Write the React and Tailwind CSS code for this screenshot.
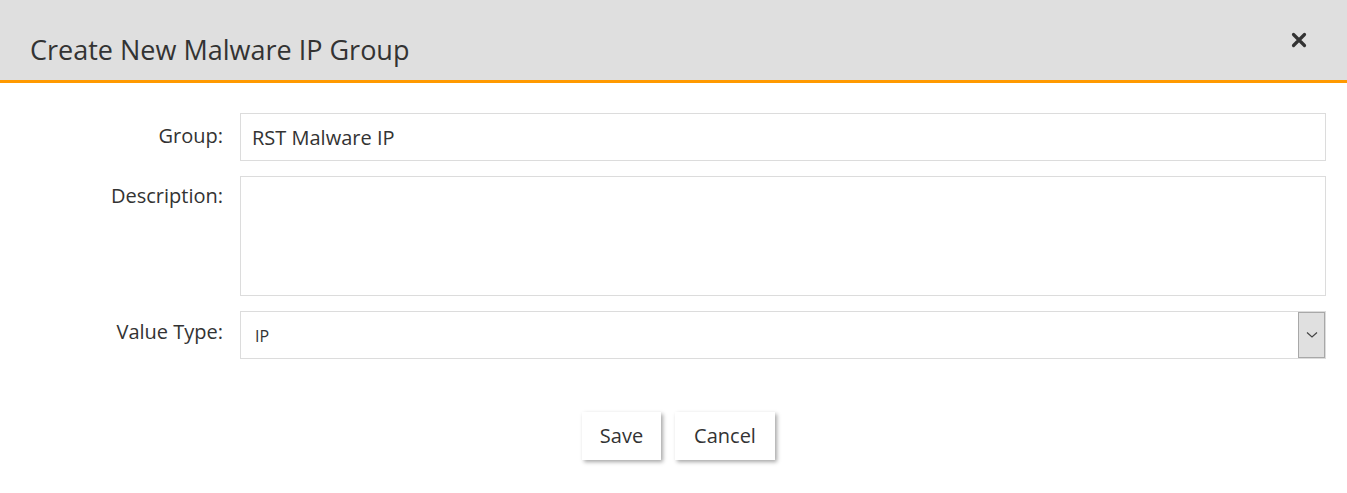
export default function App() {
  const font = { fontFamily: '"Open Sans", "Liberation Sans", sans-serif' };
  return (
    <div className="w-[1347px] h-[493px] bg-white text-[#333]" style={font}>
      <div className="h-[83px] bg-[#dfdfdf] border-b-[3px] border-[#ff9900] flex items-start justify-between pl-[30px] pr-[38px]">
        <h1 className="mt-[32px] text-[27px] leading-[36px] text-[#333]">Create New Malware IP Group</h1>
        <button className="mt-[30px] w-[20px] h-[20px] flex items-center justify-center">
          <svg width="16" height="16" viewBox="0 0 16 16">
            <path d="M2.5 2.5L13.5 13.5M13.5 2.5L2.5 13.5" stroke="#333" strokeWidth="3.2" strokeLinecap="round" />
          </svg>
        </button>
      </div>

      <div className="pt-[30px] pr-[21px] flex flex-col gap-[15px]">
        <div className="flex items-start">
          <label className="w-[224px] pr-[1px] text-right text-[20px] pt-[9px] leading-[28px]">Group:</label>
          <input
            className="ml-[16px] flex-1 h-[48px] border border-[#dcdcdc] px-[11px] text-[20px] outline-none text-[#333]"
            style={font}
            defaultValue="RST Malware IP"
          />
        </div>
        <div className="flex items-start">
          <label className="w-[224px] pr-[1px] text-right text-[20px] pt-[6px] leading-[28px]">Description:</label>
          <textarea className="ml-[16px] flex-1 h-[120px] border border-[#dcdcdc] px-[11px] py-[8px] text-[19px] outline-none resize-none" style={font} />
        </div>
        <div className="flex items-start">
          <label className="w-[224px] pr-[1px] text-right text-[20px] pt-[7px] leading-[28px]">Value Type:</label>
          <div className="ml-[16px] flex-1 h-[48px] border border-[#dcdcdc] flex items-center">
            <span className="flex-1 pl-[14px] pt-[2px] text-[16px]">IP</span>
            <div className="w-[27px] h-[46px] bg-[#e0e0e0] border border-[#a8a8a8] flex items-center justify-center">
              <svg width="12" height="8" viewBox="0 0 12 8">
                <path d="M1 1.5L6 6L11 1.5" stroke="#444" strokeWidth="1.2" fill="none" />
              </svg>
            </div>
          </div>
        </div>
      </div>

      <div className="mt-[53px] flex justify-center gap-[14px] pl-[10px]">
        <button className="w-[79px] h-[48px] bg-white text-[20px] shadow-[2px_2px_4px_rgba(0,0,0,0.35)]" style={font}>Save</button>
        <button className="w-[100px] h-[48px] bg-white text-[20px] shadow-[2px_2px_4px_rgba(0,0,0,0.35)]" style={font}>Cancel</button>
      </div>
    </div>
  );
}
